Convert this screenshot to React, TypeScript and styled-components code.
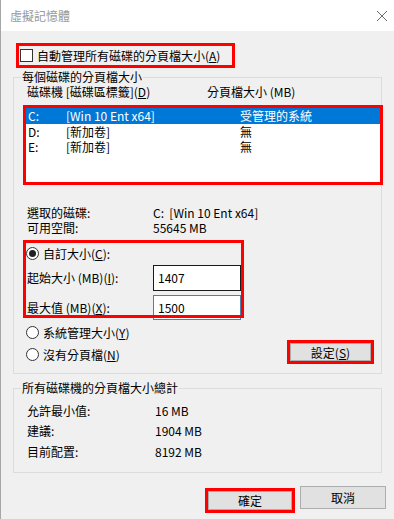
import React from 'react';
import styled, { createGlobalStyle } from 'styled-components';

const GlobalStyle = createGlobalStyle`
  html, body {
    margin: 0;
    padding: 0;
    background: #f0f0f0;
  }
  body {
    font-family: "Noto Sans CJK TC", "Noto Sans", sans-serif;
    font-size: 12px;
    color: #000;
  }
`;

interface IDrive {
  letter: string;
  label: string;
  size: string;
}

const drives: IDrive[] = [
  { letter: 'C:', label: '[Win 10 Ent x64]', size: '受管理的系統' },
  { letter: 'D:', label: '[新加卷]', size: '無' },
  { letter: 'E:', label: '[新加卷]', size: '無' },
];

const totals = [
  { label: '允許最小值:', value: '16 MB' },
  { label: '建議:', value: '1904 MB' },
  { label: '目前配置:', value: '8192 MB' },
];

function App() {
  return (
    <Dialog>
      <GlobalStyle />
      <TitleBar>
        <span>虛擬記憶體</span>
        <svg width="12" height="12" viewBox="0 0 12 12">
          <path d="M1 1 L11 11 M11 1 L1 11" stroke="#6b6b6b" strokeWidth="1" fill="none" />
        </svg>
      </TitleBar>

      <Body>
        <AutoRow>
          <CheckBox />
          <span>
            自動管理所有磁碟的分頁檔大小(<u>A</u>)
          </span>
        </AutoRow>

        <Group $top={5}>
          <GroupTitle>每個磁碟的分頁檔大小</GroupTitle>
          <ColumnHeader>
            <span>
              磁碟機 [磁碟區標籤](<u>D</u>)
            </span>
            <span>分頁檔大小 (MB)</span>
          </ColumnHeader>

          <DriveList>
            {drives.map((d, i) => (
              <DriveRow key={d.letter} $selected={i === 0}>
                <span>{d.letter}</span>
                <span>{d.label}</span>
                <span>{d.size}</span>
              </DriveRow>
            ))}
          </DriveList>

          <InfoBlock>
            <InfoRow>
              <span>選取的磁碟:</span>
              <Value>C:  [Win 10 Ent x64]</Value>
            </InfoRow>
            <InfoRow>
              <span>可用空間:</span>
              <Value>55645 MB</Value>
            </InfoRow>
          </InfoBlock>

          <CustomBox>
            <RadioRow>
              <Radio $checked />
              <span>
                自訂大小(<u>C</u>):
              </span>
            </RadioRow>
            <SizeRow>
              <SizeLabel>
                起始大小 (MB)(<u>I</u>):
              </SizeLabel>
              <SizeInput $focused readOnly value="1407" style={{ height: 26 }} />
            </SizeRow>
            <SizeRow>
              <SizeLabel>
                最大值 (MB)(<u>X</u>):
              </SizeLabel>
              <SizeInput readOnly value="1500" style={{ height: 25 }} />
            </SizeRow>
          </CustomBox>

          <BottomRow>
            <RadioColumn>
              <RadioRow>
                <Radio />
                <span>
                  系統管理大小(<u>Y</u>)
                </span>
              </RadioRow>
              <RadioRow>
                <Radio />
                <span>
                  沒有分頁檔(<u>N</u>)
                </span>
              </RadioRow>
            </RadioColumn>
            <SetButton>
              設定(<u>S</u>)
            </SetButton>
          </BottomRow>
        </Group>

        <Group $top={7}>
          <GroupTitle>所有磁碟機的分頁檔大小總計</GroupTitle>
          <TotalBlock>
            {totals.map((t) => (
              <TotalRow key={t.label}>
                <span>{t.label}</span>
                <span>{t.value}</span>
              </TotalRow>
            ))}
          </TotalBlock>
        </Group>

        <Footer>
          <OkButton>確定</OkButton>
          <DialogButton>取消</DialogButton>
        </Footer>
      </Body>
    </Dialog>
  );
}

export default App;

const Dialog = styled.div`
  width: 394px;
  height: 519px;
  box-sizing: border-box;
  border-left: 1px solid #a6a6a6;
  background: #f0f0f0;
  display: flex;
  flex-direction: column;
  overflow: hidden;
`;

const TitleBar = styled.div`
  flex: none;
  height: 31px;
  box-sizing: border-box;
  background: #fff;
  display: flex;
  align-items: center;
  justify-content: space-between;
  padding: 0 6px 0 9px;
  color: #9a9a9a;
  font-size: 12px;
`;

const Body = styled.div`
  padding-left: 12px;
  display: flex;
  flex-direction: column;
`;

const AutoRow = styled.label`
  margin: 15px 0 0 6px;
  width: 213px;
  height: 19px;
  box-sizing: border-box;
  padding-left: 1px;
  display: flex;
  align-items: center;
  gap: 4px;
  outline: 3px solid #ff0000;
  line-height: 15px;
`;

const CheckBox = styled.span`
  width: 13px;
  height: 13px;
  box-sizing: border-box;
  border: 1px solid #333;
  background: #fff;
  flex: none;
`;

const Group = styled.fieldset<{ $top: number }>`
  margin: ${(p) => p.$top}px 0 0 0;
  padding: 0;
  width: 369px;
  box-sizing: border-box;
  border: 1px solid #dcdcdc;
  min-width: 0;
`;

const GroupTitle = styled.legend`
  margin-left: 7px;
  padding: 0 1px;
  line-height: 14px;
  font-size: 12px;
`;

const ColumnHeader = styled.div`
  display: grid;
  grid-template-columns: 180px auto;
  padding-left: 13px;
  line-height: 16px;
`;

const DriveList = styled.div`
  margin: 8px 0 0 12px;
  width: 354px;
  height: 74px;
  background: #fff;
  outline: 3px solid #ff0000;
`;

const DriveRow = styled.div<{ $selected?: boolean }>`
  display: grid;
  grid-template-columns: 38px 174px auto;
  padding-left: 2px;
  height: 15.5px;
  line-height: 15.5px;
  background: ${(p) => (p.$selected ? '#0078d7' : 'transparent')};
  color: ${(p) => (p.$selected ? '#fff' : '#000')};
`;

const InfoBlock = styled.div`
  margin-top: 22.5px;
  padding-left: 13px;
`;

const InfoRow = styled.div`
  display: grid;
  grid-template-columns: 126px auto;
  line-height: 15.5px;
`;

const Value = styled.span`
  white-space: pre;
`;

const CustomBox = styled.div`
  margin: 7.5px 0 0 12px;
  width: 215px;
  height: 72px;
  box-sizing: border-box;
  padding-top: 2.5px;
  outline: 3px solid #ff0000;
  display: flex;
  flex-direction: column;
  gap: 4px;
`;

const RadioRow = styled.div`
  display: flex;
  align-items: center;
  gap: 4px;
  height: 15px;
  line-height: 15px;
`;

const Radio = styled.span<{ $checked?: boolean }>`
  flex: none;
  width: 13px;
  height: 13px;
  box-sizing: border-box;
  border: 1px solid #333;
  border-radius: 50%;
  background: #fff;
  display: inline-flex;
  align-items: center;
  justify-content: center;
  &::after {
    content: '';
    width: 7px;
    height: 7px;
    border-radius: 50%;
    background: #222;
    display: ${(p) => (p.$checked ? 'block' : 'none')};
  }
`;

const SizeRow = styled.div`
  display: flex;
  align-items: center;
  &:first-of-type {
    margin-top: -4px;
  }
`;

const SizeLabel = styled.span`
  width: 126px;
  padding-left: 1px;
`;

const SizeInput = styled.input<{ $focused?: boolean }>`
  width: 88px;
  box-sizing: border-box;
  margin: 0;
  padding: 0 0 0 4px;
  border: 1px solid ${(p) => (p.$focused ? '#1a1a1a' : '#4f7fae')};
  background: #fff;
  font-family: inherit;
  font-size: 12px;
  color: #000;
  outline: none;
`;

const BottomRow = styled.div`
  display: flex;
  justify-content: space-between;
  align-items: flex-end;
  padding: 9.5px 10px 11.5px 12px;
`;

const RadioColumn = styled.div`
  display: flex;
  flex-direction: column;
  gap: 7px;
`;

const DialogButton = styled.button`
  width: 86px;
  height: 23px;
  box-sizing: border-box;
  margin: 0;
  padding: 0;
  border: 1px solid #adadad;
  background: #e1e1e1;
  font-family: inherit;
  font-size: 12px;
  color: #000;
`;

const SetButton = styled(DialogButton)`
  width: 81px;
  height: 18px;
  margin-bottom: 0.5px;
  outline: 3px solid #ff0000;
`;

const TotalBlock = styled.div`
  padding: 5.75px 0 9.75px 13px;
`;

const TotalRow = styled.div`
  display: grid;
  grid-template-columns: 128px auto;
  height: 20.5px;
  line-height: 20.5px;
`;

const Footer = styled.div`
  margin-top: 13px;
  display: flex;
  justify-content: flex-end;
  align-items: flex-start;
  gap: 8px;
  padding-right: 8px;
`;

const OkButton = styled(DialogButton)`
  width: 84px;
  height: 19px;
  margin-top: 5px;
  outline: 3px solid #ff0000;
`;
